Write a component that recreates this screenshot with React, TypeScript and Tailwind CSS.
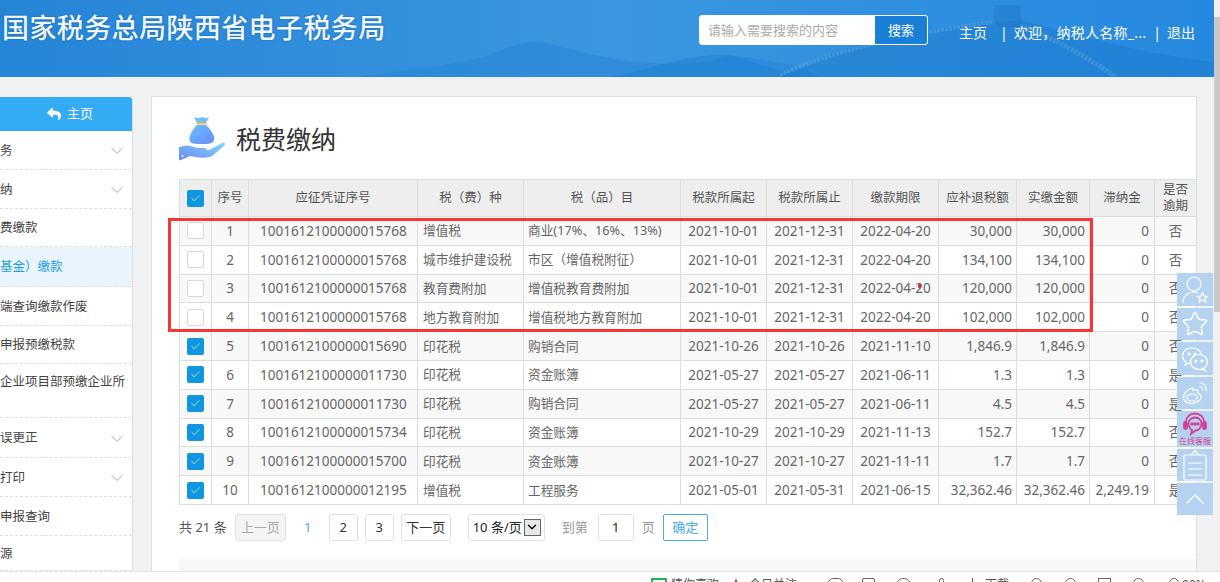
import { ChevronDown, ChevronUp, Star, Check } from 'lucide-react';
import { FaReply } from 'react-icons/fa';

const sideItems = [
  { label: '务', arrow: true, h: 'h-[39px]' },
  { label: '纳', arrow: true, h: 'h-[39px]' },
  { label: '费缴款', h: 'h-[38px]' },
  { label: '基金）缴款', active: true, h: 'h-[40px]' },
  { label: '端查询缴款作废', h: 'h-[39px]' },
  { label: '申报预缴税款', h: 'h-[38px]' },
  { label: '企业项目部预缴企业所', tall: true, h: 'h-[54px]' },
  { label: '误更正', arrow: true, h: 'h-[40px]' },
  { label: '打印', arrow: true, h: 'h-[39px]' },
  { label: '申报查询', h: 'h-[39px]' },
  { label: '源', h: 'h-[35px]' },
];

const rows = [
  ['1', '1001612100000015768', '增值税', '商业(17%、16%、13%)', '2021-10-01', '2021-12-31', '2022-04-20', '30,000', '30,000', '0', '否'],
  ['2', '1001612100000015768', '城市维护建设税', '市区（增值税附征）', '2021-10-01', '2021-12-31', '2022-04-20', '134,100', '134,100', '0', '否'],
  ['3', '1001612100000015768', '教育费附加', '增值税教育费附加', '2021-10-01', '2021-12-31', '2022-04-20', '120,000', '120,000', '0', '否'],
  ['4', '1001612100000015768', '地方教育附加', '增值税地方教育附加', '2021-10-01', '2021-12-31', '2022-04-20', '102,000', '102,000', '0', '否'],
  ['5', '1001612100000015690', '印花税', '购销合同', '2021-10-26', '2021-10-26', '2021-11-10', '1,846.9', '1,846.9', '0', '否'],
  ['6', '1001612100000011730', '印花税', '资金账簿', '2021-05-27', '2021-05-27', '2021-06-11', '1.3', '1.3', '0', '是'],
  ['7', '1001612100000011730', '印花税', '购销合同', '2021-05-27', '2021-05-27', '2021-06-11', '4.5', '4.5', '0', '是'],
  ['8', '1001612100000015734', '印花税', '资金账簿', '2021-10-29', '2021-10-29', '2021-11-13', '152.7', '152.7', '0', '否'],
  ['9', '1001612100000015700', '印花税', '资金账簿', '2021-10-27', '2021-10-27', '2021-11-11', '1.7', '1.7', '0', '否'],
  ['10', '1001612100000012195', '增值税', '工程服务', '2021-05-01', '2021-05-31', '2021-06-15', '32,362.46', '32,362.46', '2,249.19', '是'],
];

const colWidths = ['w-[32px]', 'w-[37px]', 'w-[169px]', 'w-[106px]', 'w-[157px]', 'w-[86px]', 'w-[86px]', 'w-[86px]', 'w-[78px]', 'w-[73px]', 'w-[65px]', 'w-[42px]'];

const headers = ['序号', '应征凭证序号', '税（费）种', '税（品）目', '税款所属起', '税款所属止', '缴款期限', '应补退税额', '实缴金额', '滞纳金'];

const cellAlign = ['text-center', 'text-left pl-[11px]', 'text-left pl-[5px]', 'text-left pl-[4px]', 'text-center', 'text-center', 'text-center', 'text-right pr-[4px]', 'text-right pr-[4px]', 'text-right pr-[5px]', 'text-center'];

function Box({ checked }: { checked: boolean }) {
  if (!checked) {
    return <span className="block mx-auto h-[17px] w-[17px] rounded-[2px] border border-[#d9d9d9] bg-white" />;
  }
  return (
    <span className="flex mx-auto h-[17px] w-[17px] items-center justify-center rounded-[2px] bg-[#0e97e0]">
      <Check size={11} color="#fff" strokeWidth={1.5} />
    </span>
  );
}

function PageBtn({ children, className }: { children: React.ReactNode; className?: string }) {
  return (
    <span className={`flex h-[27px] items-center justify-center rounded-[3px] border border-[#e1e1e1] text-[13px] ${className ?? ''}`}>
      {children}
    </span>
  );
}

function SideButton({ children, className }: { children: React.ReactNode; className: string }) {
  return <div className={`flex w-[36px] items-center justify-center bg-[#b5d3f0] ${className}`}>{children}</div>;
}

function MoneyIcon() {
  return (
    <svg width="48" height="47" viewBox="0 0 48 47" className="shrink-0">
      <defs>
        <linearGradient id="bag" x1="0" y1="0" x2="1" y2="1">
          <stop offset="0" stopColor="#66c0fa" />
          <stop offset="1" stopColor="#6c8cfa" />
        </linearGradient>
        <linearGradient id="hand" x1="0" y1="1" x2="1" y2="0">
          <stop offset="0" stopColor="#6a88f4" />
          <stop offset="1" stopColor="#85d6f8" />
        </linearGradient>
      </defs>
      <path d="M16 2 Q20 4 24 2 Q28 4 31 2 L28 8 H19 Z" fill="#6fc0f8" />
      <rect x="18.5" y="7.5" width="10" height="2" fill="#f6b860" />
      <path d="M19 10 H28 C32 14 37 20 36 25 C35 29 30 29 24 29 C17 29 12 29 11.5 25 C11 20 15 14 19 10 Z" fill="url(#bag)" />
      <path d="M1 32 L8 30.5 C13 30 17 33 22 33 H27 C29 33 29 36 27 36 H21 L31 35 L44 28 C47 27 48 29 46 31 L34 41 C30 43 24 43 18 42 L12 41 L3 45 C1.500 45.500 1 45 1 43 Z" fill="url(#hand)" />
      <circle cx="4.500" cy="41" r="1" fill="#fff" />
    </svg>
  );
}

function HeaderArt() {
  return (
    <svg className="absolute inset-0 h-full w-full" viewBox="0 0 1214 77" preserveAspectRatio="none">
      <path d="M360 77 C420 68 470 62 490 55 C505 48 520 42 535 42 C560 43 590 58 640 62 C670 64 700 66 730 55 C760 60 790 62 810 72 L820 77 Z" fill="#1e7fd2" opacity="0.35" />
      <path d="M610 77 C640 72 660 64 690 58 C710 55 725 52 745 60 L800 77 Z" fill="#1c7cd0" opacity="0.4" />
      <path d="M780 77 C820 55 880 35 930 30 C960 25 985 22 1000 22 L1020 20 C1060 30 1120 50 1214 62 V77 Z" fill="#1a75c8" opacity="0.4" />
      <path d="M993 20 L995 5 H1020 L1022 26 L1000 28 Z" fill="#1c6fc0" opacity="0.35" />
      <path d="M780 75 C830 52 900 35 993 22" stroke="#6fb2ea" strokeWidth="4" fill="none" opacity="0.35" strokeDasharray="3 1" />
      <path d="M1020 26 C1050 36 1085 56 1116 77" stroke="#6fb2ea" strokeWidth="5" fill="none" opacity="0.3" strokeDasharray="3 1" />
    </svg>
  );
}

export default function App() {
  return (
    <div className="relative flex h-[582px] w-[1220px] flex-col overflow-hidden bg-white font-['Noto_Sans','Noto_Sans_CJK_SC',sans-serif]">
      <div className="flex h-[571px]">
        <div className="flex w-[1214px] flex-col bg-[#f0f1f3]">
          {/* Header */}
          <header className="relative flex h-[77px] shrink-0 items-start bg-gradient-to-r from-[#2585d7] via-[#3a96e0] to-[#2589df]">
            <HeaderArt />
            <h1 className="relative ml-[2px] mt-[10px] text-[27px] leading-[36px] font-medium tracking-[0.4px] text-[#f1f6fc] [text-shadow:0_0_2px_#0d5fae]">
              国家税务总局陕西省电子税务局
            </h1>
            <div className="relative ml-auto mt-[15px] flex h-[30px] w-[229px] overflow-hidden rounded-[3px] border border-white bg-white">
              <span className="flex-1 pl-[8px] text-[13px] leading-[28px] text-[#aaa]">请输入需要搜索的内容</span>
              <span className="w-[52px] bg-[#1a7fd6] text-center text-[13px] leading-[28px] text-white">搜索</span>
            </div>
            <nav className="relative ml-[31px] mr-[19px] mt-[22px] flex text-[14px] leading-[22px] text-white">
              <span>主页</span>
              <span className="ml-[13px]">|</span>
              <span className="ml-[6px] tracking-[0.25px]">欢迎，纳税人名称_...</span>
              <span className="ml-[7px]">|</span>
              <span className="ml-[6px]">退出</span>
            </nav>
          </header>

          <div className="flex min-h-0 flex-1">
            {/* Sidebar */}
            <aside className="mt-[20px] w-[133px] shrink-0 overflow-hidden border-r border-[#dcdfe4] bg-white">
              <div className="flex h-[34px] items-center rounded-tr-[3px] bg-[#33abf5] pl-[47px] text-[13px] text-white">
                <FaReply size={14} />
                <span className="ml-[6px]">主页</span>
              </div>
              {sideItems.map((item) => (
                <div
                  key={item.label}
                  className={`flex ${item.h} border-b border-dashed border-[#dedede] pr-[5px] text-[12.500px] ${item.tall ? 'items-start pt-[9px]' : 'items-center pt-[2px]'} ${item.active ? 'bg-[#e9f4fc] text-[#1a9fe0]' : 'text-[#444]'}`}
                >
                  <span className="flex-1 whitespace-nowrap">{item.label}</span>
                  {item.arrow && <ChevronDown size={20} color="#aaa" strokeWidth={1.2} />}
                </div>
              ))}
            </aside>

            {/* Main panel */}
            <main className="relative ml-[18px] mt-[19px] w-[1046px] border border-b-0 border-[#dcdfe4] bg-white">
              <div className="flex h-[82px] items-center pl-[26px] pt-[1px]">
                <MoneyIcon />
                <h2 className="ml-[10px] text-[25px] leading-[34px] text-[#333]">税费缴纳</h2>
              </div>

              <table className="ml-[27px] w-[1017px] table-fixed border-collapse text-[13.500px] text-[#666]">
                <thead>
                  <tr className="h-[37px] bg-[#eeeeee] text-[12.500px] text-[#555]">
                    <th className={`${colWidths[0]} border border-[#dddddd] font-normal`}>
                      <Box checked />
                    </th>
                    {headers.map((h, i) => (
                      <th key={h} className={`${colWidths[i + 1]} border border-[#dddddd] font-normal`}>
                        {h}
                      </th>
                    ))}
                    <th className={`${colWidths[11]} border border-[#dddddd] text-[12.500px] leading-[16px] font-normal`}>
                      是否
                      <br />
                      逾期
                    </th>
                  </tr>
                </thead>
                <tbody>
                  {rows.map((row, ri) => (
                    <tr key={row[0]} className={`h-[28.800px] ${ri % 2 === 0 ? 'bg-[#f8f8f8]' : 'bg-white'}`}>
                      <td className="border border-[#dddddd]">
                        <Box checked={ri > 3} />
                      </td>
                      {row.map((cell, ci) => (
                        <td
                          key={ci}
                          className={`border border-[#dddddd] whitespace-nowrap ${ci === 2 || ci === 3 ? 'text-[12.700px]' : ''} ${cellAlign[ci]}`}
                        >
                          {cell}
                        </td>
                      ))}
                    </tr>
                  ))}
                </tbody>
              </table>

              {/* Pagination */}
              <div className="ml-[27px] mt-[9px] flex h-[27px] items-center text-[13px] text-[#555]">
                <span>共 21 条</span>
                <PageBtn className="ml-[8px] w-[51px] bg-[#f4f4f4] text-[#aaa]">上一页</PageBtn>
                <span className="ml-[18px] w-[8px] text-center text-[#4da6f0]">1</span>
                <PageBtn className="ml-[17px] w-[29px] text-[#333]">2</PageBtn>
                <PageBtn className="ml-[7px] w-[29px] text-[#333]">3</PageBtn>
                <PageBtn className="ml-[7px] w-[50px] text-[#333]">下一页</PageBtn>
                <div className="ml-[17px] flex h-[27px] w-[77px] items-center rounded-[3px] border border-[#e1e1e1] pl-[4px] text-[#222]">
                  <span className="w-[51px] whitespace-nowrap">10 条/页</span>
                  <span className="flex h-[17px] w-[17px] items-center justify-center border border-[#666] bg-[#e8e8e8]">
                    <ChevronDown size={14} color="#111" strokeWidth={2.5} />
                  </span>
                </div>
                <span className="ml-[17px] text-[#999]">到第</span>
                <PageBtn className="ml-[10px] w-[36px] text-[#222]">1</PageBtn>
                <span className="ml-[8px] text-[#999]">页</span>
                <span className="ml-[8px] flex h-[27px] w-[45px] items-center justify-center rounded-[2px] border border-[#4aa8f5] text-[#4aa8f5]">确定</span>
              </div>

              <div className="ml-[27px] mt-[18px] h-[12px] bg-[#f8f8f8]" />

              {/* Highlight around the first four rows */}
              <div className="absolute left-[16px] top-[121px] h-[114px] w-[925px] border-[3px] border-[#f63535]" />
              <div className="absolute left-[766px] top-[187px] h-[4px] w-[3px] rounded-full bg-[#e8202a]" />
            </main>
          </div>
        </div>

        {/* Page scrollbar */}
        <div className="flex w-[6px] flex-col bg-[#f1f1f1]">
          <div className="h-[17px]" />
          <div className="h-[295px] bg-[#c9c9c9]" />
        </div>
      </div>

      {/* Browser status bar */}
      <div className="flex h-[11px] items-start overflow-hidden border-t border-[#e4e4e4] bg-white pl-[651px] pt-[6px] text-[12px] leading-[14px] text-[#555]">
        <span className="h-[14px] w-[16px] shrink-0 rounded-[1px] border-2 border-[#22b14c]" />
        <span className="ml-[4px]">猜你喜欢</span>
        <span className="ml-[14px] h-0 w-0 shrink-0 border-x-[3px] border-b-[8px] border-x-transparent border-b-[#e8332a]" />
        <span className="ml-[10px] whitespace-nowrap">今日关注</span>
        <span className="ml-[31px] h-[14px] w-[15px] shrink-0 rounded-t-[5px] border border-[#666]" />
        <span className="ml-[19px] h-[14px] w-[13px] shrink-0 rounded-[2px] border border-[#666]" />
        <span className="ml-[21px] h-[14px] w-[15px] shrink-0 rounded-full border border-[#666]" />
        <span className="ml-[28px] h-[14px] w-[5px] shrink-0 rounded-t-full border border-[#666]" />
        <span className="ml-[28px] h-[14px] w-[1px] shrink-0 bg-[#666]" />
        <span className="ml-[12px] whitespace-nowrap">下载</span>
        <span className="ml-[22px] h-[14px] w-[11px] shrink-0 rounded-full border border-[#666]" />
        <span className="ml-[23px] h-[14px] w-[11px] shrink-0 rounded-full border border-[#666]" />
        <span className="ml-[22px] h-[14px] w-[13px] shrink-0 border border-[#666]" />
        <span className="ml-[22px] h-[14px] w-[11px] shrink-0 rounded-t-full border border-[#666]" />
        <span className="ml-[25px] h-[14px] w-[10px] shrink-0 rounded-full border border-[#666]" />
        <span className="ml-[3px] whitespace-nowrap">90%</span>
      </div>

      {/* Floating tools */}
      <div className="absolute left-[1177px] top-[273px] flex w-[36px] flex-col gap-[2px] text-white">
        <SideButton className="h-[33px]">
          <svg width="30" height="30" viewBox="0 0 30 30" fill="none" stroke="#fff" strokeWidth="1.200">
            <circle cx="14" cy="9" r="7" />
            <path d="M3 28 C3 21 8 17 14 17 C16 17 17 17.500 18 18" />
            <path d="M22.500 17.500 L24 21 L27.500 21.300 L24.800 23.500 L25.700 27 L22.500 25.100 L19.300 27 L20.200 23.500 L17.500 21.300 L21 21 Z" />
          </svg>
        </SideButton>
        <SideButton className="h-[32px]">
          <Star size={28} color="#fff" strokeWidth={1.3} />
        </SideButton>
        <SideButton className="h-[33px]">
          <svg width="28" height="26" viewBox="0 0 28 26" fill="none" stroke="#fff" strokeWidth="1.200">
            <path d="M11 2 C5.500 2 1.500 5.500 1.500 10 C1.500 12.500 3 14.500 5 16 L4 19 L8 17 C9 17.300 10 17.500 11 17.500" />
            <path d="M11 2 C15.500 2 19 4.500 20 8" />
            <ellipse cx="18" cy="16" rx="8.500" ry="7.500" />
            <path d="M23 22 L24.500 25 L20.500 23.300" />
            <circle cx="8" cy="8" r="1" fill="#fff" />
            <circle cx="14" cy="8" r="1" fill="#fff" />
            <circle cx="15" cy="15" r="1" fill="#fff" />
            <circle cx="21" cy="15" r="1" fill="#fff" />
          </svg>
        </SideButton>
        <SideButton className="h-[32px]">
          <svg width="26" height="24" viewBox="0 0 26 24" fill="none" stroke="#fff" strokeWidth="1.200">
            <path d="M10 7 C5 9 1 13 1.500 17 C2 21 7 23 12 22 C17 21 20 18 19 15 C18.500 13.500 17 13 16 12.500 C16.500 10.500 16 9 14.500 8.800 C13 8.600 11.500 9.300 11 9.500 C11.500 8 11 6.500 10 7 Z" />
            <ellipse cx="10" cy="16.500" rx="5" ry="3.500" />
            <path d="M17 1.500 C21 1.500 25 5 24 10" />
            <path d="M17 5.500 C19 5.500 21 7 20.500 9.500" />
          </svg>
        </SideButton>
        <SideButton className="h-[36px] flex-col">
          <svg width="26" height="24" viewBox="0 0 26 24" fill="none" stroke="#d63f92" strokeWidth="1.800">
            <path d="M4 13 V10 C4 5 8 1.500 13 1.500 C18 1.500 22 5 22 10 V13" />
            <rect x="2" y="10" width="3" height="7" rx="1.500" fill="#d63f92" />
            <rect x="21" y="10" width="3" height="7" rx="1.500" fill="#d63f92" />
            <path d="M13 5.500 C9 5.500 6.500 8.500 6.500 11.500 C6.500 15 9 17.500 10 18 L9 22 L13.500 18.500 C17 18.500 19.500 15 19.500 11.500 C19.500 8.500 17 5.500 13 5.500 Z" />
            <circle cx="10" cy="12" r="0.800" fill="#d63f92" />
            <circle cx="13" cy="12" r="0.800" fill="#d63f92" />
            <circle cx="16" cy="12" r="0.800" fill="#d63f92" />
          </svg>
          <span className="text-[8px] leading-[10px] whitespace-nowrap text-[#d63f92]">在线客服</span>
        </SideButton>
        <SideButton className="h-[32px]">
          <svg width="26" height="32" viewBox="0 0 26 32" fill="none" stroke="#fff" strokeWidth="1.200">
            <rect x="2" y="6" width="22" height="25" rx="1.500" />
            <path d="M9 6 L13 1.500 L17 6" />
            <path d="M6 14 H20 M6 20 H20 M6 26 H20" />
          </svg>
        </SideButton>
        <SideButton className="h-[32px]">
          <ChevronUp size={32} color="#fff" strokeWidth={1} />
        </SideButton>
      </div>
    </div>
  );
}
